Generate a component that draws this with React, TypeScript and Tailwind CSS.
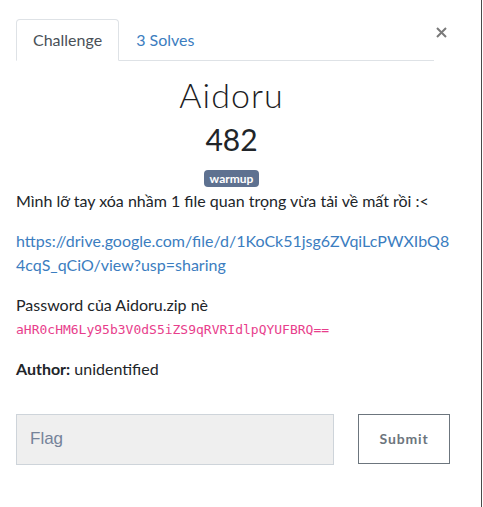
import { useState } from "react";

const App: React.FC = () => {
  const [tab, setTab] = useState<"challenge" | "solves">("challenge");
  const [flag, setFlag] = useState("");

  return (
    <div className="w-[482px] h-[507px] bg-white border-r border-[#4a4a4a] font-['Lato',sans-serif] text-[#212529]">
      <div className="pl-4 pr-[34px] pt-[19px]">
        {/* Tabs + close */}
        <div className="flex items-start">
          <div className="flex w-[421px] border-b border-[#dee2e6]">
            <button
              onClick={() => setTab("challenge")}
              className={`px-4 py-2 text-base leading-6 rounded-t-[4px] border -mb-px ${
                tab === "challenge"
                  ? "border-[#dee2e6] border-b-white bg-white text-[#495057]"
                  : "border-transparent text-[#3b7dc0]"
              }`}
            >
              Challenge
            </button>
            <button
              onClick={() => setTab("solves")}
              className={`px-4 py-2 text-base leading-6 rounded-t-[4px] border -mb-px ${
                tab === "solves"
                  ? "border-[#dee2e6] border-b-white bg-white text-[#495057]"
                  : "border-transparent text-[#3b7dc0]"
              }`}
            >
              3 Solves
            </button>
          </div>
          <button className="ml-[1px] mt-[7px] w-[12px] h-[12px] flex items-center justify-center text-[#7a7a7a]">
            <svg width="11" height="11" viewBox="0 0 11 11">
              <path d="M1 1L10 10M10 1L1 10" stroke="currentColor" strokeWidth="2" />
            </svg>
          </button>
        </div>

        {/* Header */}
        <div className="flex flex-col items-center">
          <h2 className="mt-[14px] text-[34px] leading-[1.2] tracking-[0.03em] font-light text-[#1d1d1f]">Aidoru</h2>
          <h3 className="mt-[5px] text-[30px] leading-[1.2] text-[#212529]">482</h3>
          <span className="mt-[13px] mb-[2px] h-[17px] px-[6px] rounded-[4px] bg-[#5e7190] text-white text-[12px] font-bold leading-[17px]">
            warmup
          </span>
        </div>

        {/* Description */}
        <div className="w-[434px] text-base leading-6">
          <p className="mb-4">Mình lỡ tay xóa nhầm 1 file quan trọng vừa tải về mất rồi :&lt;</p>
          <p className="mb-4 break-all">
            <a href="#" className="text-[#3b7dc0]">
              https://drive.google.com/file/d/1KoCk51jsg6ZVqiLcPWXIbQ84cqS_qCiO/view?usp=sharing
            </a>
          </p>
          <p className="mb-4 leading-[23px]">
            Password của Aidoru.zip nè
            <br />
            <code className="font-['DejaVu_Sans_Mono',monospace] text-[13px] text-[#e83e8c]">
              aHR0cHM6Ly95b3V0dS5iZS9qRVRIdlpQYUFBRQ==
            </code>
          </p>
          <p>
            <span className="font-bold">Author:</span> unidentified
          </p>
        </div>

        {/* Submit row */}
        <div className="mt-[33px] flex items-start">
          <input
            value={flag}
            onChange={(e) => setFlag(e.target.value)}
            placeholder="Flag"
            className="w-[318px] h-[51px] shrink-0 pl-[13px] bg-[#efefef] border border-[#ced4da] font-['Liberation_Sans',sans-serif] text-[17px] text-[#495057] placeholder:text-[#75839a] outline-none"
          />
          <button className="ml-[24px] w-[92px] h-[50px] shrink-0 border border-[#6c757d] bg-white text-[#6c757d] text-[14px] font-bold tracking-[0.06em]">
            Submit
          </button>
        </div>
      </div>
    </div>
  );
};

export default App;
